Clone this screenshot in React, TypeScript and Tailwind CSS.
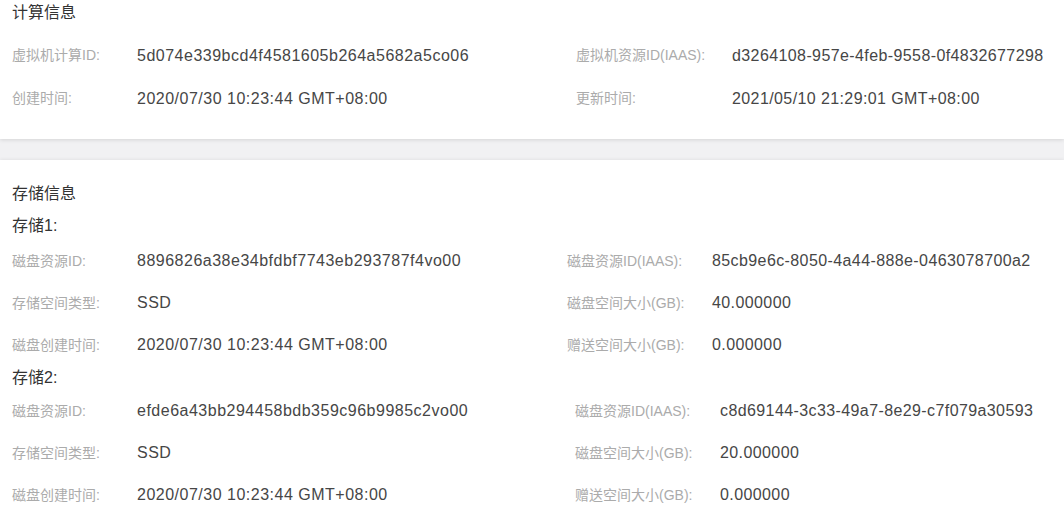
const computeRows = [
  ["虚拟机计算ID:", "5d074e339bcd4f4581605b264a5682a5co06", "虚拟机资源ID(IAAS):", "d3264108-957e-4feb-9558-0f4832677298"],
  ["创建时间:", "2020/07/30 10:23:44 GMT+08:00", "更新时间:", "2021/05/10 21:29:01 GMT+08:00"],
];

const disks = [
  {
    name: "存储1:",
    leftWidth: "w-[555px]",
    rightLabel: "w-[145px]",
    rows: [
      ["磁盘资源ID:", "8896826a38e34bfdbf7743eb293787f4vo00", "磁盘资源ID(IAAS):", "85cb9e6c-8050-4a44-888e-0463078700a2"],
      ["存储空间类型:", "SSD", "磁盘空间大小(GB):", "40.000000"],
      ["磁盘创建时间:", "2020/07/30 10:23:44 GMT+08:00", "赠送空间大小(GB):", "0.000000"],
    ],
  },
  {
    name: "存储2:",
    leftWidth: "w-[563px]",
    rightLabel: "w-[145px]",
    rows: [
      ["磁盘资源ID:", "efde6a43bb294458bdb359c96b9985c2vo00", "磁盘资源ID(IAAS):", "c8d69144-3c33-49a7-8e29-c7f079a30593"],
      ["存储空间类型:", "SSD", "磁盘空间大小(GB):", "20.000000"],
      ["磁盘创建时间:", "2020/07/30 10:23:44 GMT+08:00", "赠送空间大小(GB):", "0.000000"],
    ],
  },
];

const Row = ({ row, height, leftWidth, rightLabel }: { row: string[]; height: string; leftWidth: string; rightLabel: string }) => (
  <div className={`flex items-center ${height}`}>
    <div className={`flex items-center shrink-0 ${leftWidth}`}>
      <span className="w-[125px] shrink-0 text-[14px] text-[#ababab]">{row[0]}</span>
      <span className="text-[16px] tracking-[0.5px] text-[#464646]">{row[1]}</span>
    </div>
    <span className={`shrink-0 text-[14px] text-[#ababab] ${rightLabel}`}>{row[2]}</span>
    <span className="text-[16px] tracking-[0.4px] text-[#464646]">{row[3]}</span>
  </div>
);

export default function App() {
  return (
    <div
      className="min-h-screen bg-[#f1f1f3] overflow-hidden"
      style={{ fontFamily: '"Liberation Sans", "Noto Sans CJK SC", sans-serif' }}
    >
      {/* 计算信息 */}
      <div className="bg-white px-3 pt-[1px] pb-[19px] shadow-[0_1px_4px_rgba(0,0,0,0.12)]">
        <div className="h-6 leading-6 text-[16px] text-[#333]">计算信息</div>
        <div className="mt-[9px]">
          {computeRows.map((row) => (
            <Row key={row[0]} row={row} height="h-[43px]" leftWidth="w-[564px]" rightLabel="w-[156px]" />
          ))}
        </div>
      </div>

      {/* 存储信息 */}
      <div className="mt-[21px] bg-white px-3 pt-[22px] pb-4 shadow-[0_-1px_3px_rgba(0,0,0,0.06)]">
        <div className="h-6 leading-6 text-[16px] text-[#333]">存储信息</div>
        {disks.map((disk, i) => (
          <div key={disk.name}>
            <div className={`h-6 leading-6 text-[16px] text-[#333] ${i === 0 ? "mt-2 mb-[2px]" : ""}`}>{disk.name}</div>
            {disk.rows.map((row) => (
              <Row key={row[0]} row={row} height="h-[42px]" leftWidth={disk.leftWidth} rightLabel={disk.rightLabel} />
            ))}
          </div>
        ))}
      </div>
    </div>
  );
}
